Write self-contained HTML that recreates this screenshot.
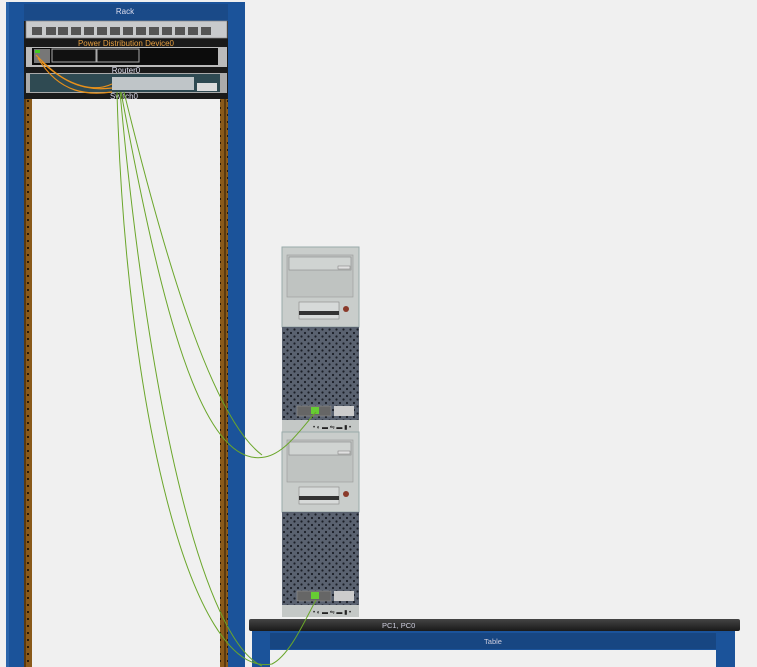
<!DOCTYPE html>
<html><head><style>
html,body{margin:0;padding:0;background:#f0f0f0;width:757px;height:667px;overflow:hidden;font-family:"Liberation Sans",sans-serif}
</style></head><body>
<svg width="757" height="667" viewBox="0 0 757 667" xmlns="http://www.w3.org/2000/svg" font-family="Liberation Sans, sans-serif">
<defs>
<pattern id="rail" width="8" height="7" patternUnits="userSpaceOnUse"><rect width="8" height="7" fill="#8a5a1a"/><rect x="0" width="2" height="7" fill="#5a3a10"/><rect x="3" y="2" width="2" height="2" fill="#2a1a08"/></pattern>
<pattern id="grill" width="7" height="7" patternUnits="userSpaceOnUse"><rect width="7" height="7" fill="#5a6270"/><circle cx="2" cy="2" r="1.1" fill="#1a1e26"/><circle cx="5.5" cy="5.5" r="1.1" fill="#1a1e26"/></pattern>
<linearGradient id="bar" x1="0" y1="0" x2="0" y2="1"><stop offset="0" stop-color="#444"/><stop offset="1" stop-color="#1a1a1a"/></linearGradient>
<g id="pc">
<rect x="0" y="0" width="77" height="80" fill="#c9cdcb" stroke="#9aa" stroke-width="1"/>
<rect x="5" y="8" width="66" height="42" fill="#bfc3c1" stroke="#999" stroke-width="0.6"/>
<rect x="7" y="10" width="62" height="13" fill="#d0d4d2" stroke="#888" stroke-width="0.6"/>
<rect x="56" y="19" width="12" height="3" fill="#e0e0e0" stroke="#777" stroke-width="0.5"/>
<rect x="17" y="55" width="40" height="17" fill="#d7dad9" stroke="#888" stroke-width="0.6"/>
<rect x="17" y="64" width="40" height="4" fill="#333"/>
<circle cx="64" cy="62" r="3" fill="#8a3a2a"/>
<rect x="0" y="80" width="77" height="93" fill="url(#grill)"/>
<rect x="15" y="159" width="34" height="10" fill="#666" stroke="#999" stroke-width="0.5"/>
<rect x="29" y="160" width="8" height="7" fill="#6c3"/>
<rect x="52" y="159" width="20" height="10" fill="#ccc"/>
<rect x="0" y="173" width="77" height="12" fill="#c4c8c6"/>
<text x="31" y="182" font-size="6" fill="#222">• ◐ ▬ ⇋ ▬ ▮ •</text>
</g>
</defs>
<rect x="6" y="2" width="239" height="665" fill="#1b539a"/>
<rect x="6" y="2" width="3" height="665" fill="#2a64aa"/>
<rect x="24" y="4" width="204" height="17" fill="#1a4a88"/>
<text x="125" y="14" font-size="8" fill="#dde" text-anchor="middle">Rack</text>
<rect x="24" y="21" width="8" height="646" fill="url(#rail)"/>
<rect x="220" y="21" width="8" height="646" fill="url(#rail)"/>
<rect x="32" y="99" width="188" height="568" fill="#f0f0f0"/>
<rect x="24" y="21" width="204" height="78" fill="#1a1a1a"/>
<rect x="26" y="21" width="201" height="17" fill="#c8cacc" stroke="#888" stroke-width="0.7"/>
<g fill="#555">
<rect x="32" y="27" width="10" height="8"/><rect x="46" y="27" width="10" height="8"/><rect x="58" y="27" width="10" height="8"/><rect x="71" y="27" width="10" height="8"/><rect x="84" y="27" width="10" height="8"/><rect x="97" y="27" width="10" height="8"/><rect x="110" y="27" width="10" height="8"/><rect x="123" y="27" width="10" height="8"/><rect x="136" y="27" width="10" height="8"/><rect x="149" y="27" width="10" height="8"/><rect x="162" y="27" width="10" height="8"/><rect x="175" y="27" width="10" height="8"/><rect x="188" y="27" width="10" height="8"/><rect x="201" y="27" width="10" height="8"/></g>
<text x="126" y="46" font-size="8" fill="#e8a040" text-anchor="middle">Power Distribution Device0</text>
<rect x="26" y="47" width="201" height="20" fill="#bbb"/>
<rect x="32" y="48" width="186" height="17" fill="#0c0c0c"/>
<rect x="52" y="49" width="44" height="13" fill="#111" stroke="#aaa"/>
<rect x="97" y="49" width="42" height="13" fill="#111" stroke="#aaa"/>
<rect x="34" y="49" width="16" height="14" fill="#777"/>
<rect x="35" y="50" width="5" height="3" fill="#4c2"/>
<text x="126" y="73" font-size="8" fill="#dde" text-anchor="middle">Router0</text>
<rect x="26" y="73" width="201" height="20" fill="#aaa"/>
<rect x="30" y="74" width="190" height="18" fill="#2f4a52"/>
<rect x="112" y="77" width="82" height="13" fill="#bfc5c8"/>
<rect x="197" y="83" width="20" height="8" fill="#ddd"/>
<text x="124" y="99" font-size="8" fill="#dde" text-anchor="middle">Switch0</text>
<use href="#pc" x="282" y="247"/>
<use href="#pc" x="282" y="432"/>
<rect x="249" y="619" width="491" height="12" rx="2" fill="url(#bar)"/>
<text x="382" y="628" font-size="7.5" fill="#ccd">PC1, PC0</text>
<rect x="252" y="631" width="483" height="36" fill="#1b539a"/>
<rect x="270" y="633" width="446" height="16" fill="#174682"/>
<text x="493" y="644" font-size="7.5" fill="#ccd" text-anchor="middle">Table</text>
<rect x="270" y="650" width="446" height="17" fill="#f0f0f0"/>
<g fill="none" stroke="#e8901a" stroke-width="1.2">
<path d="M36 55 C60 80 80 92 112 88"/><path d="M38 58 C60 95 90 95 112 92"/><path d="M42 62 C70 88 95 92 112 84"/>
</g>
<g fill="none" stroke="#6aa62a" stroke-width="1">
<path d="M121 92 C160 300 200 470 265 457 C285 453 300 430 316 412"/>
<path d="M124 92 C170 280 215 420 262 455"/>
<path d="M117 92 C125 400 190 680 272 664 C290 655 305 620 316 600"/>
<path d="M120 92 C150 420 205 640 262 666"/>
</g>
</svg>
</body></html>
